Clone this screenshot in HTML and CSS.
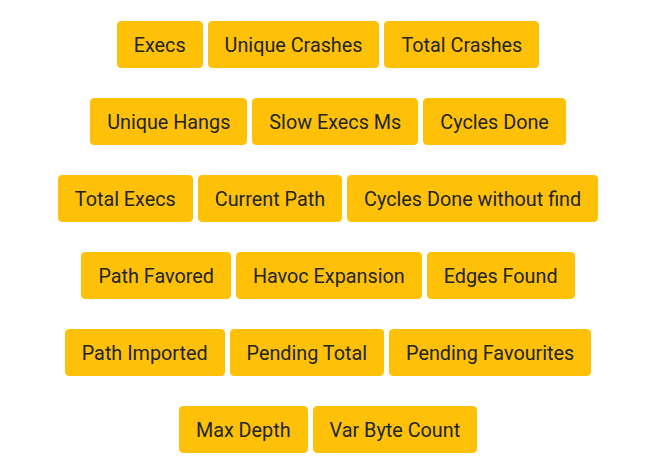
FILE: index.html
```html
<!DOCTYPE html>
<html>
<head>
<meta charset="utf-8">
<link rel="stylesheet" href="styles.css">
</head>
<body>
<div class="wrap">
  <div class="row"><span class="btn">Execs</span><span class="btn">Unique Crashes</span><span class="btn">Total Crashes</span></div>
  <div class="row"><span class="btn">Unique Hangs</span><span class="btn">Slow Execs Ms</span><span class="btn">Cycles Done</span></div>
  <div class="row"><span class="btn">Total Execs</span><span class="btn">Current Path</span><span class="btn">Cycles Done without find</span></div>
  <div class="row"><span class="btn">Path Favored</span><span class="btn">Havoc Expansion</span><span class="btn">Edges Found</span></div>
  <div class="row"><span class="btn">Path Imported</span><span class="btn">Pending Total</span><span class="btn">Pending Favourites</span></div>
  <div class="row"><span class="btn">Max Depth</span><span class="btn">Var Byte Count</span></div>
</div>
</body>
</html>
```
FILE: styles.css
```css
html, body { margin: 0; padding: 0; background: #fff; }
body { padding: 21px 8px 0 8px; font-family: Roboto, "Noto Sans", sans-serif; }
.wrap { width: 640px; display: flex; flex-direction: column; gap: 30px; }
.row { display: flex; justify-content: center; gap: 5px; }
.btn {
  display: block;
  background: #ffc107;
  color: #212529;
  border: 1px solid #ffc107;
  border-radius: 4px;
  padding: 8px 16px 6px;
  font-size: 19.8px;
  line-height: 31px;
  white-space: nowrap;
}
```
